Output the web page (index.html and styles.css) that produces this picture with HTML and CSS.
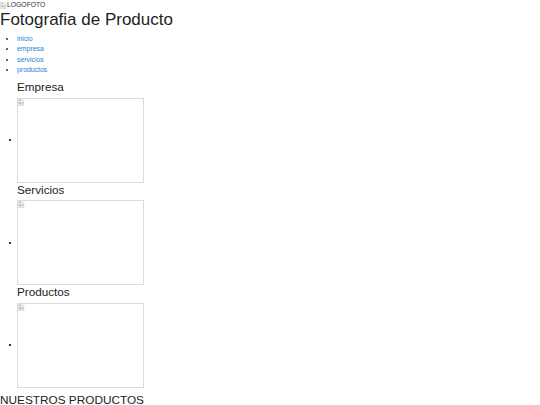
FILE: index.html
```html
<!DOCTYPE html>
<html lang="es">
<head>
<meta charset="utf-8">
<title>Fotografia de Producto</title>
<link rel="stylesheet" href="styles.css">
</head>
<body>
<header class="header">
  <div class="logo">
    <svg class="broken" viewBox="0 0 14 14" width="7" height="7" aria-hidden="true">
      <path d="M1 1h8l3 3v4l-2 1-2-1-2 1-2-1-3 1z" fill="#f4f4f4" stroke="#c4c4c4" stroke-width="1"/>
      <path d="M1 11l3-1 2 1 2-1 2 1 2-1v3H1z" fill="#f4f4f4" stroke="#c4c4c4" stroke-width="1"/>
      <path d="M2 9l3-3 3 2 3-2v2l-2 1-2-1-2 1-3 1z" fill="#7cbf5f"/>
      <rect x="2" y="2" width="4" height="2" fill="#9cc3e8"/>
    </svg><span>LOGOFOTO</span>
  </div>
  <h1 class="title">Fotografia de Producto</h1>
  <nav>
    <ul class="menu">
      <li><a href="#">inicio</a></li>
      <li><a href="#">empresa</a></li>
      <li><a href="#">servicios</a></li>
      <li><a href="#">productos</a></li>
    </ul>
  </nav>
</header>
<main>
  <ul class="sections">
    <li class="section">
      <h3 class="section-title">Empresa</h3>
      <div class="card-row">
        <span class="dot"></span>
        <div class="frame">
          <svg class="broken" viewBox="0 0 14 14" width="7" height="7" aria-hidden="true">
            <path d="M1 1h8l3 3v4l-2 1-2-1-2 1-2-1-3 1z" fill="#f4f4f4" stroke="#c4c4c4" stroke-width="1"/>
            <path d="M1 11l3-1 2 1 2-1 2 1 2-1v3H1z" fill="#f4f4f4" stroke="#c4c4c4" stroke-width="1"/>
            <path d="M2 9l3-3 3 2 3-2v2l-2 1-2-1-2 1-3 1z" fill="#7cbf5f"/>
            <rect x="2" y="2" width="4" height="2" fill="#9cc3e8"/>
          </svg>
        </div>
      </div>
    </li>
    <li class="section">
      <h3 class="section-title">Servicios</h3>
      <div class="card-row">
        <span class="dot"></span>
        <div class="frame">
          <svg class="broken" viewBox="0 0 14 14" width="7" height="7" aria-hidden="true">
            <path d="M1 1h8l3 3v4l-2 1-2-1-2 1-2-1-3 1z" fill="#f4f4f4" stroke="#c4c4c4" stroke-width="1"/>
            <path d="M1 11l3-1 2 1 2-1 2 1 2-1v3H1z" fill="#f4f4f4" stroke="#c4c4c4" stroke-width="1"/>
            <path d="M2 9l3-3 3 2 3-2v2l-2 1-2-1-2 1-3 1z" fill="#7cbf5f"/>
            <rect x="2" y="2" width="4" height="2" fill="#9cc3e8"/>
          </svg>
        </div>
      </div>
    </li>
    <li class="section">
      <h3 class="section-title">Productos</h3>
      <div class="card-row">
        <span class="dot"></span>
        <div class="frame">
          <svg class="broken" viewBox="0 0 14 14" width="7" height="7" aria-hidden="true">
            <path d="M1 1h8l3 3v4l-2 1-2-1-2 1-2-1-3 1z" fill="#f4f4f4" stroke="#c4c4c4" stroke-width="1"/>
            <path d="M1 11l3-1 2 1 2-1 2 1 2-1v3H1z" fill="#f4f4f4" stroke="#c4c4c4" stroke-width="1"/>
            <path d="M2 9l3-3 3 2 3-2v2l-2 1-2-1-2 1-3 1z" fill="#7cbf5f"/>
            <rect x="2" y="2" width="4" height="2" fill="#9cc3e8"/>
          </svg>
        </div>
      </div>
    </li>
  </ul>
  <h2 class="products-title">NUESTROS PRODUCTOS</h2>
</main>
</body>
</html>
```
FILE: styles.css
```css
html, body {
  margin: 0;
  padding: 0;
  background: #ffffff;
}

body {
  font-family: "Liberation Sans", Arial, sans-serif;
  color: #222222;
}

.logo {
  display: flex;
  align-items: center;
  height: 10px;
  font-size: 6.8px;
  line-height: 10px;
  color: #333333;
}

.broken {
  display: block;
  flex: none;
}

.title {
  margin: 0;
  font-size: 17px;
  line-height: 20px;
  font-weight: normal;
  color: #222222;
}

.menu {
  margin: 4px 0 0;
  padding-left: 17px;
  font-size: 6.9px;
  line-height: 10.33px;
  color: #333333;
}

.menu a {
  color: #1e7fd8;
  text-decoration: none;
}

.sections {
  list-style: none;
  margin: 5px 0 0;
  padding-left: 17px;
}

.section-title {
  margin: 0 0 4px;
  font-size: 11.7px;
  line-height: 13.5px;
  font-weight: normal;
  color: #222222;
}

.card-row {
  display: flex;
  align-items: center;
  margin-left: -17px;
}

.dot {
  width: 2px;
  height: 2px;
  margin: 0 6px 0 9px;
  background: #333333;
  flex: none;
}

.frame {
  box-sizing: border-box;
  width: 127px;
  height: 85px;
  border: 1px solid #dcdcdc;
  padding: 0;
}

.products-title {
  margin: 6px 0 0;
  font-size: 11.8px;
  line-height: 13.5px;
  font-weight: normal;
  color: #222222;
}
```
